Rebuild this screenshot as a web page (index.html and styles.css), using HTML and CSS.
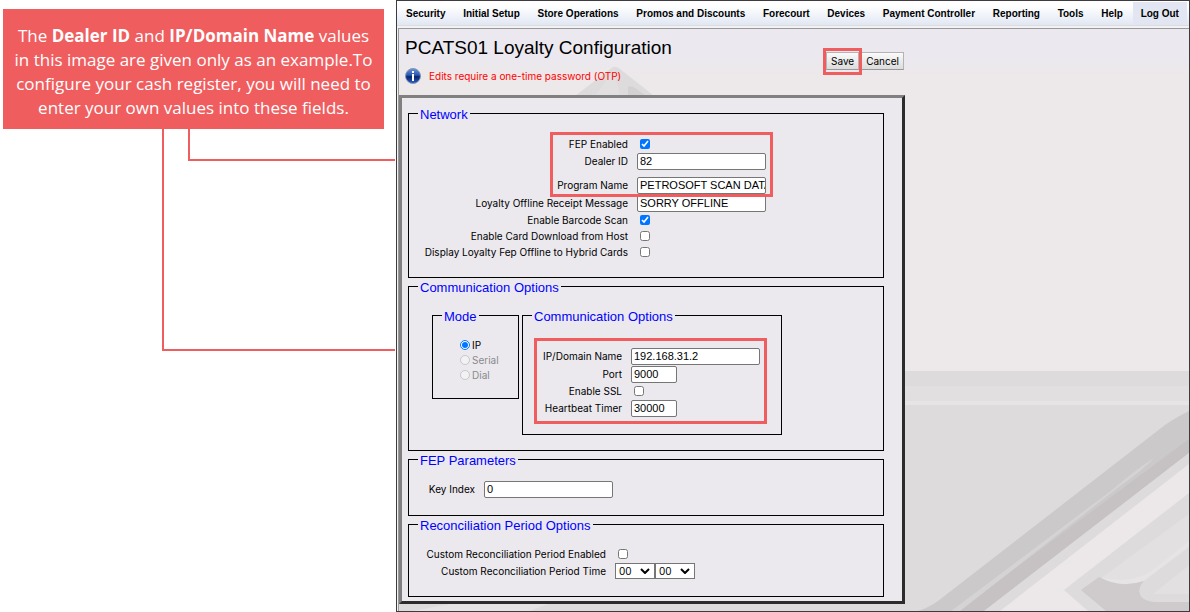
FILE: index.html
```html
<!DOCTYPE html>
<html lang="en">
<head>
<meta charset="utf-8">
<title>PCATS01 Loyalty Configuration</title>
<link rel="stylesheet" href="styles.css">
</head>
<body>
<div class="page">
  <aside class="notes">
    <p class="callout">The <b>Dealer ID</b> and <b>IP/Domain Name</b> values<br>in this image are given only as an example.To<br>configure your cash register, you will need to<br>enter your own values into these fields.</p>
    <div class="wire wire-long"></div>
    <div class="wire wire-short"></div>
  </aside>
  <div class="app">
    <nav class="menu">
      <a href="#">Security</a><a href="#">Initial Setup</a><a href="#">Store Operations</a><a href="#">Promos and Discounts</a><a href="#">Forecourt</a><a href="#">Devices</a><a href="#">Payment Controller</a><a href="#">Reporting</a><a href="#">Tools</a><a href="#">Help</a><a href="#" class="logout">Log Out</a>
    </nav>
    <main class="content">
      <svg class="backdrop" width="790" height="582" viewBox="399 29 790 582" aria-hidden="true">
        <path fill="#dddbdc" d="M575 96 613 67Q616 66 620 69L654 96Z"/>
        <path fill="#d3d1d2" d="M628 96V87Q631 85 635 88L646 96Z"/>
        <path fill="#e5e3e4" d="M614 69 620 96H595Z" opacity=".5"/>
        <path fill="#dddbdc" d="M399 371H1189V611H399Z"/>
        <path fill="#e2dfe0" d="M399 386H1189V401H399Z"/>
        <path fill="#e6e4e5" d="M399 401H1189V405H399Z"/>
        <path fill="#ece8e9" d="M412 611 450 604H548L530 611Z" opacity=".6"/>
        <path fill="#cbc9ca" d="M918 611Q928 608 938 601L1165 425Q1175 418 1189 411V453L985 611Z"/>
        <path fill="#c6c2c3" d="M958 611 1189 439V453L984 611Z"/>
        <path fill="#d5d3d4" d="M951 611 1112 490Q1135 470 1154 458Q1143 470 1120 486L960 611Z"/>
        <path fill="#dddbdc" d="M984 611 1189 453V464L1000 611Z"/>
        <path fill="#ece8e9" d="M1000 611 1189 464V611Z"/>
        <path fill="#dddbdc" d="M1189 493 1064 590 1088 611H1189Z"/>
        <path fill="#e2e0e1" d="M1189 514 1101 578Q1122 588 1144 581L1189 548Z"/>
        <path fill="#e6e4e5" d="M1101 578Q1122 588 1144 581L1189 546V541L1155 568Q1137 584 1101 578Z"/>
        <path fill="#cfcbcc" d="M1081 590 1099 577Q1120 589 1144 581Q1138 587 1140 594Q1143 602 1160 602H1189V611H1106Z"/>
        <path fill="#dddbdc" d="M1144 581 1189 548V602H1160Q1143 602 1140 594Q1138 587 1144 581Z"/>
        <path fill="#e2e0e1" d="M1153 594 1189 565V594Z"/>
      </svg>
      <header class="head">
        <div class="heading">
          <h1>PCATS01 Loyalty Configuration</h1>
          <p class="otp">
            <svg width="16" height="16" viewBox="0 0 16 16" aria-hidden="true">
              <defs><linearGradient id="ball" x1="0" y1="0" x2="0" y2="1"><stop offset="0" stop-color="#6f97d8"/><stop offset=".45" stop-color="#2456ac"/><stop offset=".55" stop-color="#08246e"/><stop offset="1" stop-color="#2c66c4"/></linearGradient></defs>
              <circle cx="8" cy="8" r="7.5" fill="url(#ball)" stroke="#7f94bf"/>
              <path fill="#fff" d="M7 3h2v2H7zM7 6h2v7H7z"/>
            </svg>
            <span>Edits require a one-time password (OTP)</span>
          </p>
        </div>
        <div class="actions">
          <span class="marked marked-save"><button type="button">Save</button></span>
          <button type="button">Cancel</button>
        </div>
      </header>
      <form class="panel">
        <fieldset class="group">
          <legend>Network</legend>
          <div class="rows rows-network">
            <div class="marked marked-network">
              <div class="row"><label for="fep">FEP Enabled</label><input type="checkbox" id="fep" checked></div>
              <div class="row field spaced"><label for="dealer">Dealer ID</label><input type="text" id="dealer" value="82"></div>
              <div class="row field"><label for="program">Program Name</label><input type="text" id="program" value="PETROSOFT SCAN DATA"></div>
            </div>
            <div class="row field"><label for="offline">Loyalty Offline Receipt Message</label><input type="text" id="offline" value="SORRY OFFLINE"></div>
            <div class="row"><label for="scan">Enable Barcode Scan</label><input type="checkbox" id="scan" checked></div>
            <div class="row"><label for="card">Enable Card Download from Host</label><input type="checkbox" id="card"></div>
            <div class="row"><label for="hybrid">Display Loyalty Fep Offline to Hybrid Cards</label><input type="checkbox" id="hybrid"></div>
          </div>
        </fieldset>
        <fieldset class="group">
          <legend>Communication Options</legend>
          <div class="pair">
            <fieldset class="mode">
              <legend>Mode</legend>
              <div class="radios">
                <label><input type="radio" name="mode" checked>IP</label>
                <label class="off"><input type="radio" name="mode" disabled>Serial</label>
                <label class="off"><input type="radio" name="mode" disabled>Dial</label>
              </div>
            </fieldset>
            <fieldset class="link">
              <legend>Communication Options</legend>
              <div class="rows rows-link marked marked-link">
                <div class="row field"><label for="ip">IP/Domain Name</label><input type="text" id="ip" value="192.168.31.2"></div>
                <div class="row field"><label for="port">Port</label><input type="text" class="short" id="port" value="9000"></div>
                <div class="row"><label for="ssl">Enable SSL</label><input type="checkbox" id="ssl"></div>
                <div class="row field"><label for="beat">Heartbeat Timer</label><input type="text" class="short" id="beat" value="30000"></div>
              </div>
            </fieldset>
          </div>
        </fieldset>
        <fieldset class="group">
          <legend>FEP Parameters</legend>
          <div class="rows rows-key">
            <div class="row field"><label for="key">Key Index</label><input type="text" id="key" value="0"></div>
          </div>
        </fieldset>
        <fieldset class="group">
          <legend>Reconciliation Period Options</legend>
          <div class="rows rows-period">
            <div class="row"><label for="period">Custom Reconciliation Period Enabled</label><input type="checkbox" id="period"></div>
            <div class="row field"><label for="hour">Custom Reconciliation Period Time</label><span class="time"><span class="pick"><select id="hour"><option>00</option></select><svg width="10" height="6" viewBox="0 0 10 6" aria-hidden="true"><path d="M1 1 5 5 9 1"/></svg></span><span class="pick"><select aria-label="Minutes"><option>00</option></select><svg width="10" height="6" viewBox="0 0 10 6" aria-hidden="true"><path d="M1 1 5 5 9 1"/></svg></span></span></div>
          </div>
        </fieldset>
      </form>
    </main>
  </div>
</div>
</body>
</html>
```
FILE: styles.css
```css
* { box-sizing: border-box; }

body {
  margin: 0;
  background: #fff;
  color: #000;
  font-family: "Liberation Sans", Arial, sans-serif;
}

.page { display: flex; min-height: 100vh; }

/* callout column */
.notes { position: relative; flex: 0 0 396px; padding: 9px 12px 0 3px; }

.callout {
  margin: 0;
  padding: 15px 0 9px;
  background: #f05d5e;
  color: #fff;
  font: 17px/24px "Open Sans", "Noto Sans", sans-serif;
  text-align: center;
  white-space: nowrap;
}

.wire {
  position: absolute;
  top: 129px;
  right: 1px;
  border: solid #f05d5e;
  border-width: 0 0 2px 2px;
}
.wire-long { left: 162px; height: 222px; }
.wire-short { left: 188px; height: 32px; }

/* application window */
.app {
  flex: 1;
  display: flex;
  flex-direction: column;
  min-width: 0;
  border: 1px solid #3d3b3f;
  background: #f2f2f4;
}

.menu {
  display: flex;
  justify-content: space-between;
  height: 25px;
  padding: 1px 2px 0 1px;
  background: linear-gradient(#fff 20%, #e1e7f3);
  border-bottom: 1px solid #dcdcdc;
}
.menu a {
  padding: 0 8px;
  color: #000;
  font-size: 10px;
  font-weight: bold;
  line-height: 24px;
  text-decoration: none;
  white-space: nowrap;
}
.menu .logout { background: #e1e6f2; }

.content {
  position: relative;
  flex: 1;
  margin: 2px 0 0 1px;
  padding-bottom: 7px;
  overflow: hidden;
  border: solid #999;
  border-width: 1px 0 0 1px;
  background: linear-gradient(#ebe9ef 0, #ebe9ef 30px, #ede8e9 48px);
}

.backdrop { position: absolute; right: 0; bottom: 0; }

.head {
  position: relative;
  display: flex;
  justify-content: space-between;
  width: 506px;
  height: 66px;
  padding: 7px 1px 0 6px;
}
.heading h1 { margin: 0; font-size: 19px; font-weight: normal; line-height: 24px; }
.otp {
  display: flex;
  align-items: center;
  gap: 8px;
  margin: 8px 0 0;
  color: #f00;
  font: 10px/16px Inter, Verdana, sans-serif;
}

.actions { display: flex; align-items: flex-start; gap: 2px; padding-top: 16px; }
.actions button {
  display: block;
  height: 18px;
  padding: 0 4px;
  border: 1px solid #b4b4b4;
  border-bottom-color: #999;
  background: linear-gradient(#fafafa, #dcdcdc);
  color: #000;
  font: 10px/16px Inter, Verdana, sans-serif;
}

/* red frames drawn over the parts that matter */
.marked { position: relative; }
.marked::after {
  content: "";
  position: absolute;
  z-index: 1;
  border: 3px solid #f05d5e;
  pointer-events: none;
}
.marked-save::after { inset: -4px -3px -5px; }
.marked-network::after { inset: -4px -7px -3px 132px; }
.marked-link::after { inset: -9px -7px -7px -9px; }

/* form */
.panel {
  position: relative;
  display: grid;
  gap: 1px;
  width: 506px;
  padding: 8px 18px 4px 6px;
  border: 3px solid;
  border-color: #808080 #2c2c2c #2c2c2c #808080;
  background: #ebe9ee;
  font-size: 10px;
}

fieldset { margin: 0; min-width: 0; padding: 0 9px; border: 1px solid #000; }
legend {
  padding: 2px 2px 0;
  color: #00f;
  font-size: 13px;
  line-height: 13px;
  white-space: nowrap;
}

.rows { width: max-content; }
.row {
  display: grid;
  grid-template-columns: var(--label) auto;
  justify-content: start;
  align-items: center;
  column-gap: 9px;
  height: 16px;
}
.row.field { height: 18px; }
.row.spaced { margin-bottom: 6px; }
.row label {
  font-family: Inter, Verdana, sans-serif;
  line-height: 16px;
  text-align: right;
  white-space: nowrap;
}

.rows-network { --label: 210px; margin: 15px 0 17px; }
.rows-link { --label: 79px; margin: 24px 0 17px 11px; }
.rows-key { --label: 57px; margin: 13px 0 17px; }
.rows-period { --label: 188px; margin: 14px 0 16px; }

input[type="text"] {
  width: 129px;
  height: 17px;
  padding: 0 0 0 2px;
  border: 1px solid #767676;
  border-radius: 2px;
  background: #fff;
  color: #000;
  font: 11px/15px "Liberation Sans", Arial, sans-serif;
}
input[type="text"].short { width: 46px; }
input[type="checkbox"] { width: 10px; height: 10px; margin: 0 0 0 3px; }
.rows-network .marked { width: 348px; }

.pair { display: flex; align-items: flex-start; gap: 3px; margin: 14px 0 15px 14px; }
.mode { width: 87px; }
.link { width: 260px; }

.radios { margin: 14px 0 16px 18px; }
.radios label {
  display: flex;
  align-items: center;
  gap: 2px;
  height: 15px;
  font-family: Inter, Verdana, sans-serif;
}
.radios .off { color: #8a8a8c; }
input[type="radio"] { width: 10px; height: 10px; margin: 0; }

.time { display: flex; }
.pick { position: relative; display: block; }
.pick svg {
  position: absolute;
  top: 5px;
  right: 5px;
  fill: none;
  stroke: #000;
  stroke-width: 2;
  pointer-events: none;
}
select {
  display: block;
  appearance: none;
  width: 40px;
  height: 16px;
  padding: 0 3px;
  border: 1px solid #767676;
  border-radius: 0;
  background: #fff;
  color: #000;
  font: 10px/14px Inter, Verdana, sans-serif;
}
```
